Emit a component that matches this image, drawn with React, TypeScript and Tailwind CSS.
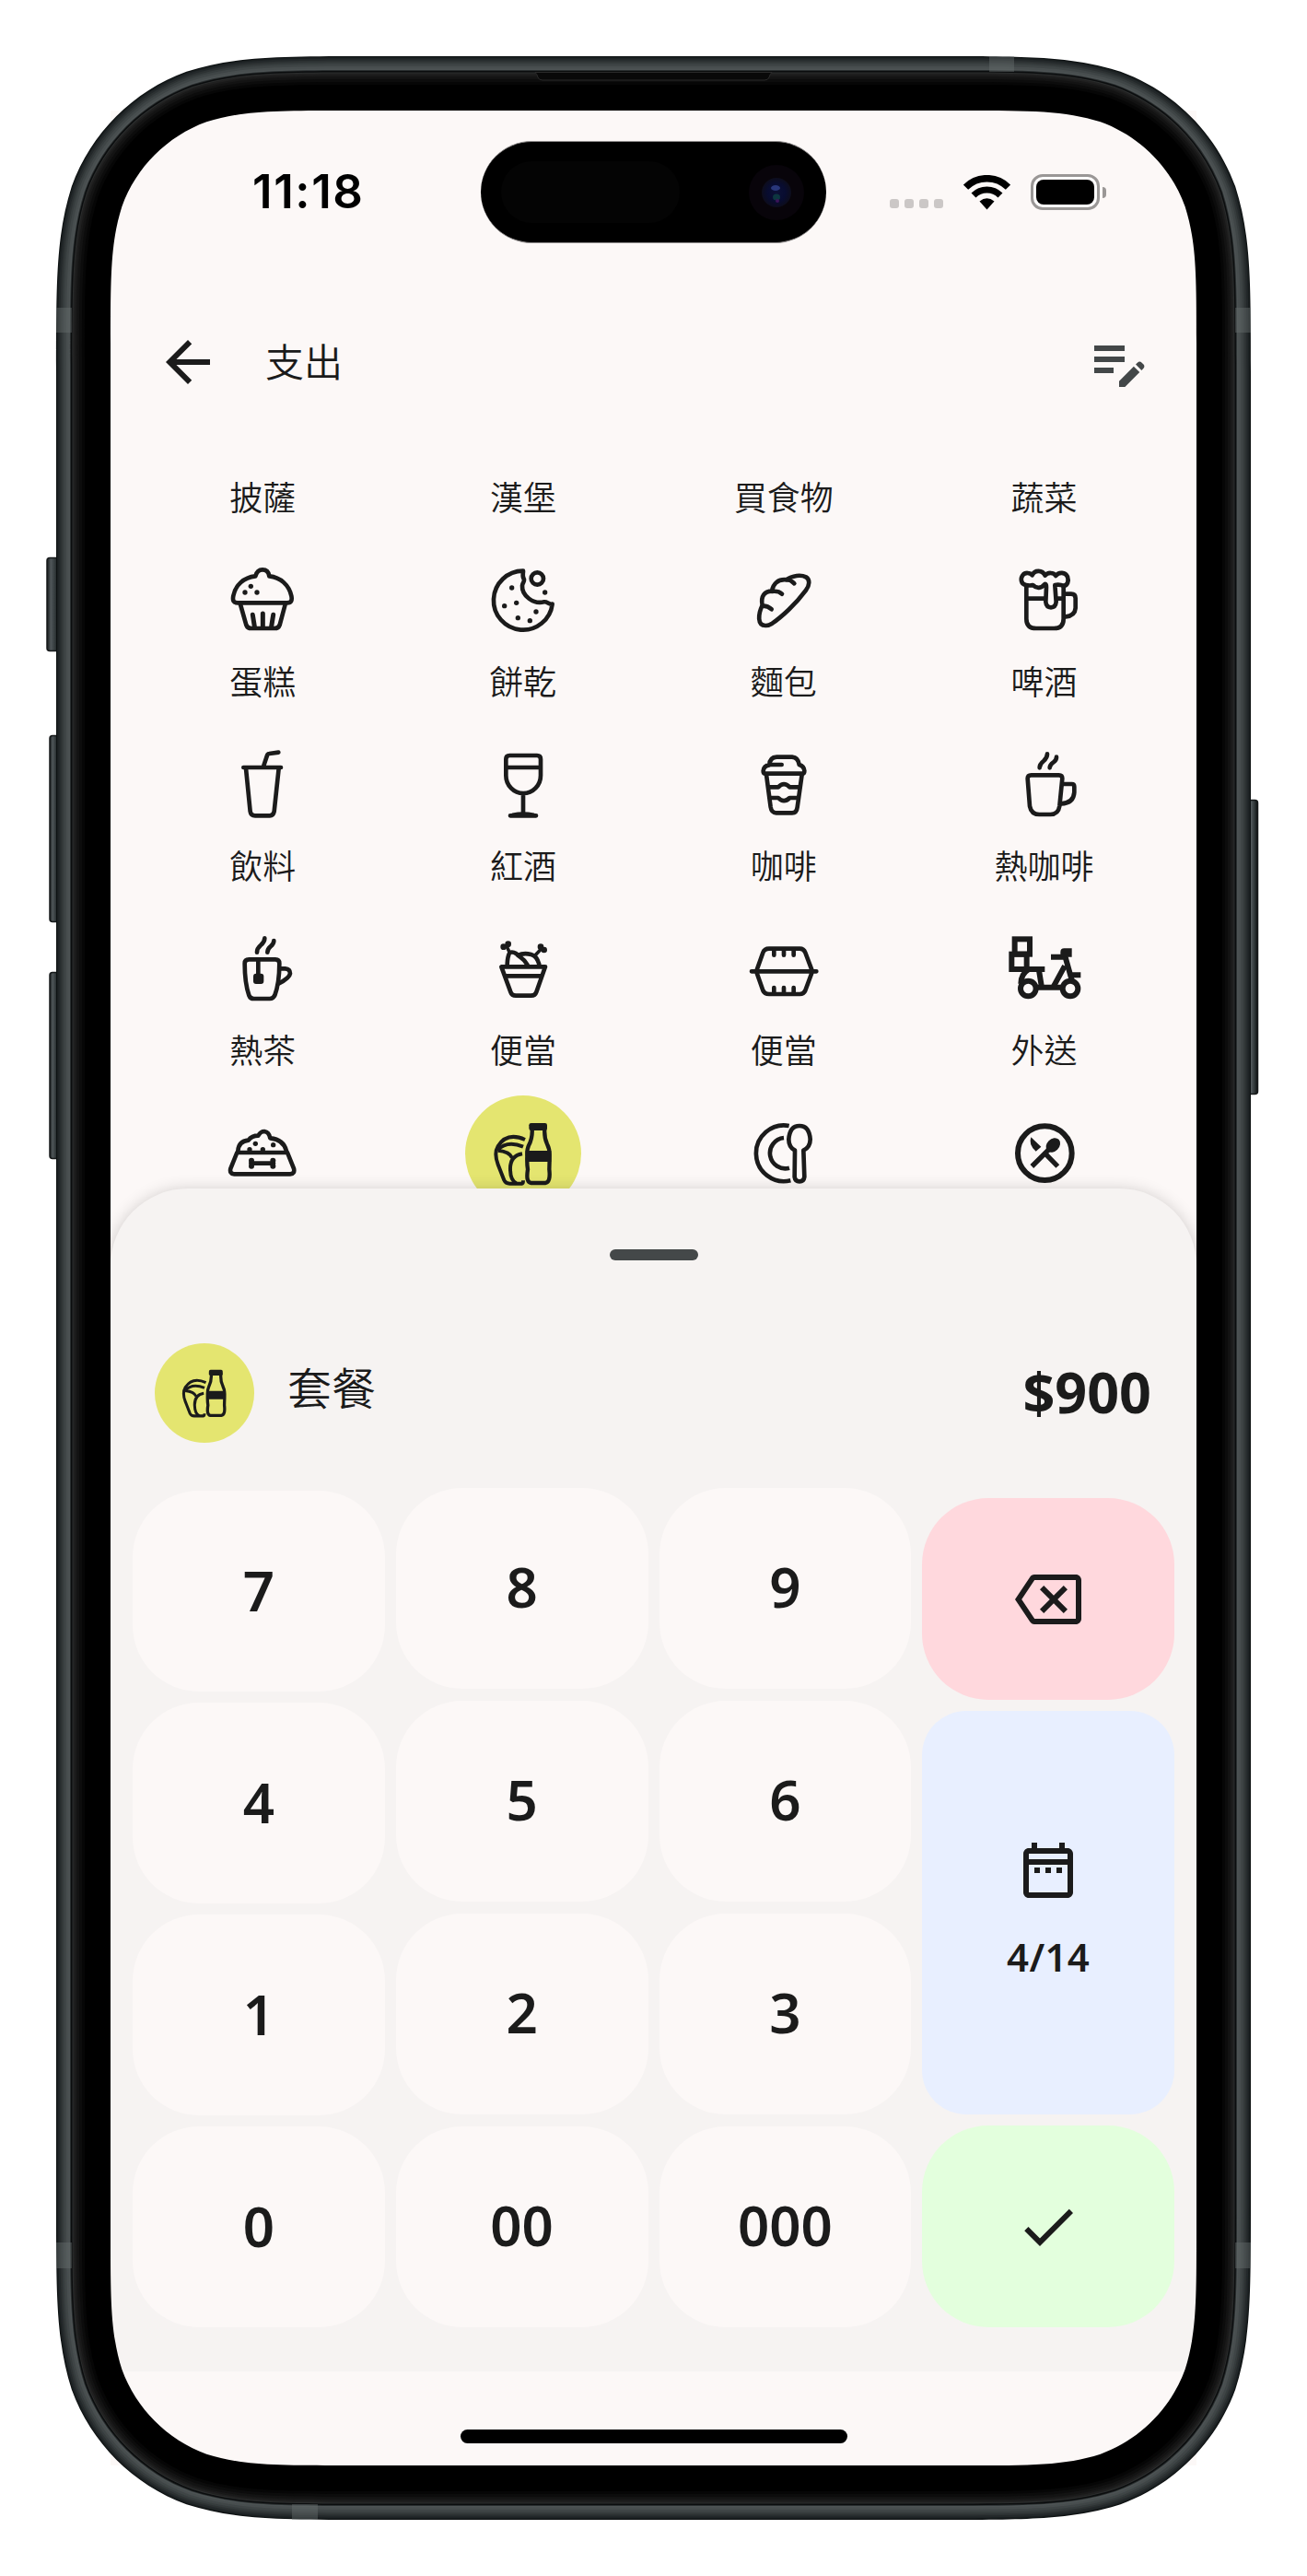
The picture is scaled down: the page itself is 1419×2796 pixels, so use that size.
import React from "react";

const INK = "#1b1b1b";

const Dots = ({ at, r = 8 }: { at: [number, number][]; r?: number }) => (
  <g fill={INK} stroke="none">
    {at.map(([x, y]) => (
      <circle key={`${x}-${y}`} cx={x} cy={y} r={r} />
    ))}
  </g>
);

type GlyphProps = { box: string; children: React.ReactNode; className?: string; width?: number };

const Glyph = ({ box, children, className = "size-[126px]", width = 14 }: GlyphProps) => (
  <svg viewBox={box} className={className} fill="none" stroke={INK} strokeWidth={width} strokeLinecap="round" strokeLinejoin="round">
    {children}
  </svg>
);

const Muffin = () => (
  <Glyph box="67 267 378 378">
    <path d="M175 463C161 463 158 455 161 440C168 405 195 380 233 376C237 361 245 355 256 355C268 355 276 362 278 376C315 380 342 405 350 440C353 455 350 463 336 463Z" />
    <path d="M184 468L203 535Q207 546 220 546H295Q308 546 312 535L330 468" />
    <path d="M224 502L230 540M257 498V540M291 502L285 540" strokeWidth="15" />
    <Dots at={[[218, 409], [199, 429], [238, 429]]} />
  </Glyph>
);

const Cookie = () => (
  <Glyph box="915 267 378 378">
    <path d="M1104 359A96 96 0 1 0 1199 467C1188 469 1182 458 1172 460C1138 469 1099 440 1101 407C1102 396 1108 398 1107 386C1100 378 1104 370 1104 359Z" />
    <circle cx="1150" cy="384" r="20" />
    <Dots at={[[1067, 414], [1043, 473], [1082, 463], [1087, 512], [1126, 521], [1146, 492], [1175, 429]]} />
  </Glyph>
);

const Bread = () => (
  <Glyph box="84 267 378 378">
    <path d="M213 537C186 537 189 500 203 471C197 442 210 425 234 425C238 400 255 385 282 388C300 373 330 371 345 379C359 388 357 405 345 422C312 467 265 510 235 530Q222 538 213 537Z" />
    <path d="M203 473Q220 472 233 484M234 426Q255 423 267 434M282 387Q296 388 307 400" />
  </Glyph>
);

const Beer = () => (
  <Glyph box="932 267 378 378">
    <path d="M1060 405C1044 402 1042 384 1050 373C1058 363 1074 364 1081 373C1089 355 1114 355 1123 374C1131 363 1151 363 1158 375C1168 361 1189 363 1196 378C1201 393 1196 405 1184 408" />
    <path d="M1060 405Q1074 408 1083 405Q1103 424 1122 402Q1127 401 1127 412L1125 460Q1127 478 1142 478Q1157 478 1159 460L1155 405Q1170 402 1184 408" />
    <path d="M1062 408V515Q1062 546 1094 546H1152Q1183 546 1183 515V408M1066 449H1122M1162 449H1183" />
    <path d="M1186 434H1208Q1222 434 1222 448V480Q1220 505 1190 508" />
  </Glyph>
);

const Soda = () => (
  <Glyph box="67 867 378 378">
    <path d="M260 993L271 960Q273 954 278 954L308 950M194 999H316" />
    <path d="M202 1002L216 1142Q218 1156 232 1156H280Q291 1156 294 1142L309 1002" />
  </Glyph>
);

const Wine = () => (
  <Glyph box="915 867 378 378">
    <path d="M1048 972Q1048 960 1060 960H1149Q1161 960 1161 972V1025A56.5 58 0 0 1 1048 1025ZM1048 999H1161M1104 1083V1150" />
    <path d="M1062 1156H1146M1070 1154Q1104 1147 1138 1154" />
  </Glyph>
);

const TakeawayCup = () => (
  <Glyph box="84 867 378 378">
    <path d="M213 1019Q206 1019 206 1010Q208 993 226 991Q227 966 250 965H300Q320 967 323 990Q339 995 340 1010Q340 1019 333 1019ZM228 990H266" />
    <path d="M216 1022L230 1128Q233 1147 248 1147H300Q315 1147 317 1128L332 1022" />
    <path d="M225 1063H255Q273 1044 292 1063H325M229 1098H255Q273 1117 292 1098H320" />
  </Glyph>
);

const HotCoffee = () => (
  <Glyph box="932 867 378 378">
    <path d="M1066 1035Q1066 1024 1078 1024H1168Q1179 1024 1179 1035L1170 1125Q1166 1152 1140 1152H1104Q1078 1152 1073 1125Z" />
    <path d="M1180 1053H1210Q1218 1053 1218 1062V1080Q1216 1115 1175 1117" />
    <path d="M1105 1000Q1105 988 1118 978Q1130 968 1130 955M1138 1000Q1138 990 1150 982Q1160 975 1160 965" />
  </Glyph>
);

const Tea = () => (
  <Glyph box="67 267 378 378">
    <path d="M238 401Q238 388 250 378Q263 368 263 355M272 401Q272 390 282 382Q293 374 293 363" />
    <path d="M198 437Q198 424 212 424H298Q311 424 311 437Q311 500 296 541Q291 552 280 552H228Q216 552 212 541Q198 500 198 437Z" />
    <path d="M311 454H330Q346 455 346 470Q344 485 308 503M242 424V475" />
    <rect x="226" y="470" width="34" height="34" rx="9" fill={INK} stroke="none" />
  </Glyph>
);

const Bucket = () => (
  <Glyph box="915 267 378 378">
    <path d="M1033 448H1176L1147 530Q1143 542 1130 542H1080Q1067 542 1063 530ZM1046 478H1163" />
    <path d="M1052 440Q1053 415 1060 402Q1070 398 1081 405L1094 416Q1110 427 1118 442M1087 411Q1105 402 1130 408Q1148 412 1156 440" />
    <path d="M1060 402L1052 385M1142 412L1162 391" strokeWidth="11" />
    <Dots r={10} at={[[1040, 383], [1055, 374], [1161, 383], [1172, 393]]} />
  </Glyph>
);

const LunchBox = () => (
  <Glyph box="84 267 378 378">
    <path d="M168 463H379M185 458L205 402Q210 389 225 389H325Q338 389 343 402L364 458M185 468L205 525Q210 537 225 537H325Q338 537 343 525L364 468" />
    <path d="M241 392V410M273 392V410M305 392V410M241 516V534M273 516V534M305 516V534" />
  </Glyph>
);

const Scooter = () => (
  <Glyph box="932 267 378 378" width={18}>
    <g strokeLinecap="butt" strokeLinejoin="miter">
      <rect x="1024" y="358" width="49" height="49" />
      <rect x="1014" y="407" width="49" height="49" />
      <circle cx="1068" cy="519" r="25" />
      <circle cx="1205" cy="519" r="25" />
      <path d="M1060 456H1122M1103 460L1112 515M1044 503Q1044 472 1070 456M1095 515H1180" />
      <path d="M1149 515L1187 445M1187 410L1211 495M1142 416H1192M1205 475H1239" />
      <path d="M1173 416V400Q1173 388 1185 388H1210V416Z" fill={INK} stroke="none" />
    </g>
  </Glyph>
);

const PetBowl = () => (
  <Glyph box="67 867 378 378">
    <path d="M173 1053L152 1105Q148 1122 164 1123H346Q362 1122 358 1105L337 1053Z" />
    <path d="M176 1048Q178 1016 210 1013Q221 998 242 998Q250 984 262 984Q277 986 281 1006Q325 1010 334 1048" />
    <path d="M218 1088H292" />
    <Dots r={9} at={[[220, 1079], [220, 1097], [290, 1079], [290, 1097]]} />
    <Dots at={[[233, 1024], [291, 1028], [214, 1043], [257, 1043]]} />
  </Glyph>
);

const MealSet = ({ className }: { className?: string }) => (
  <Glyph box="915 867 378 378" width={13} className={className}>
    <path d="M1133 975Q1135 1005 1122 1030Q1116 1042 1117 1065Q1116 1090 1119 1108Q1112 1150 1130 1152H1176Q1194 1150 1189 1108Q1190 1085 1190 1060Q1190 1040 1182 1025Q1172 1005 1174 975" />
    <rect x="1123" y="957" width="59" height="24" rx="7" fill={INK} stroke="none" />
    <path d="M1112 1047H1195V1083H1114Z" fill={INK} stroke="none" />
    <g strokeLinecap="butt" strokeWidth="12">
      <path d="M1110 1011Q1052 985 1022 1032Q1008 1055 1022 1092L1042 1143Q1047 1154 1060 1154H1100Q1104 1154 1104 1144" />
      <path d="M1020 1045Q1052 1012 1104 1034M1022 1046Q1060 1050 1068 1070M1101 1057Q1060 1064 1062 1110Q1063 1145 1082 1153" />
    </g>
  </Glyph>
);

const PlateSpoon = () => (
  <Glyph box="84 867 378 378">
    <path d="M290 966A91 91 0 1 0 295 1144M273 1005A50 50 0 1 0 291 1103" strokeLinecap="butt" />
    <path d="M309 1046Q289 1035 289 1010Q292 966 324 966Q356 966 359 1010Q359 1035 337 1046L340 1132Q338 1147 324 1147Q310 1147 308 1132Z" />
  </Glyph>
);

const CutleryCircle = () => (
  <Glyph box="932 867 378 378" width={18}>
    <circle cx="1122" cy="1055" r="88" />
    <path d="M1080 1098L1142 1036M1122 1055L1164 1098" strokeWidth="16" strokeLinecap="butt" />
    <ellipse cx="1149" cy="1029" rx="20" ry="26" transform="rotate(45 1149 1029)" fill={INK} stroke="none" />
    <path d="M1077 1003L1110 1034L1093 1049Q1068 1028 1077 1003Z" fill={INK} stroke="none" />
  </Glyph>
);

const Material = ({ d, className = "" }: { d: string; className?: string }) => (
  <svg viewBox="0 0 24 24" className={`size-[72px] shrink-0 ${className}`} fill="currentColor">
    <path d={d} />
  </svg>
);

const BACK = "M20 11H7.83l5.59-5.59L12 4l-8 8 8 8 1.41-1.41L7.83 13H20v-2z";
const EDIT_NOTE =
  "M3 10h11v2H3v-2zm0-2h11V6H3v2zm0 8h7v-2H3v2zm15.01-3.13.71-.71c.39-.39 1.02-.39 1.41 0l.71.71c.39.39.39 1.02 0 1.41l-.71.71-2.12-2.12zm-.71.71-5.3 5.3V21h2.12l5.3-5.3-2.12-2.12z";
const BACKSPACE =
  "M22 3H7c-.69 0-1.23.35-1.59.88L0 12l5.41 8.11c.36.53.9.89 1.59.89h15c1.1 0 2-.9 2-2V5c0-1.1-.9-2-2-2zm0 16H7.07L2.4 12l4.66-7H22v14zm-11.59-2L14 13.41 17.59 17 19 15.59 15.41 12 19 8.41 17.59 7 14 10.59 10.41 7 9 8.41 12.59 12 9 15.59z";
const CALENDAR =
  "M7 11h2v2H7v-2zm14-5v14c0 1.1-.9 2-2 2H5c-1.11 0-2-.9-2-2l.01-14c0-1.1.88-2 1.99-2h1V2h2v2h8V2h2v2h1c1.1 0 2 .9 2 2zM5 8h14V6H5v2zm14 12V10H5v10h14zm-4-7h2v-2h-2v2zm-4 0h2v-2h-2v2z";
const CHECK = "M9 16.17 4.83 12l-1.42 1.41L9 19 21 7l-1.41-1.41L9 16.17z";

const categories = [
  { name: "蛋糕", Icon: Muffin },
  { name: "餅乾", Icon: Cookie },
  { name: "麵包", Icon: Bread },
  { name: "啤酒", Icon: Beer },
  { name: "飲料", Icon: Soda },
  { name: "紅酒", Icon: Wine },
  { name: "咖啡", Icon: TakeawayCup },
  { name: "熱咖啡", Icon: HotCoffee },
  { name: "熱茶", Icon: Tea },
  { name: "便當", Icon: Bucket },
  { name: "便當", Icon: LunchBox },
  { name: "外送", Icon: Scooter },
  { name: "", Icon: PetBowl },
  { name: "", Icon: MealSet, selected: true },
  { name: "", Icon: PlateSpoon },
  { name: "", Icon: CutleryCircle },
];

/* Continuous-corner rounded rectangle, inset from the outer edge of the phone body. */
function body(inset: number) {
  const x0 = 61 + inset;
  const y0 = 61 + inset;
  const x1 = 1358 - inset;
  const y1 = 2735 - inset;
  const r = 224 - inset;
  const a = [1.52866, 1.08849, 0.86841, 0.63149, 0.37282, 0.16906, 0.07491].map((k) => k * r);
  const corner = (cx: number, cy: number, sx: number, sy: number, fromVertical: boolean) => {
    const pts: [number, number][] = [
      [0, a[0]], [0, a[1]], [0, a[2]], [a[6], a[3]], [a[5], a[4]],
      [a[4], a[5]], [a[3], a[6]], [a[2], 0], [a[1], 0], [a[0], 0],
    ];
    const p = (fromVertical ? pts : [...pts].reverse()).map(([x, y]) => `${(cx + sx * x).toFixed(2)} ${(cy + sy * y).toFixed(2)}`);
    return `${p[0]}C${p[1]} ${p[2]} ${p[3]}C${p[4]} ${p[5]} ${p[6]}C${p[7]} ${p[8]} ${p[9]}`;
  };
  return `M${corner(x0, y0, 1, 1, true)}L${corner(x1, y0, -1, 1, false)}L${corner(x1, y1, -1, -1, true)}L${corner(x0, y1, 1, -1, false)}Z`;
}

const bands: [number, string][] = [
  [0, "#0d1112"], [1, "#1a1f20"], [2.5, "#23282a"], [4.5, "#2d3233"], [6.5, "#363c3d"], [8.5, "#3f4546"],
  [11, "#484e4f"], [13.5, "#4d5354"], [15, "#2a2f30"], [16, "#0b0d0e"], [17.5, "#2b2d2d"], [18.5, "#202020"],
  [20.5, "#191919"], [22.5, "#131313"], [25, "#0c0c0c"], [28, "#060606"],
];

const bandEnd = body(45);

const PhoneBody = () => (
  <svg viewBox="0 0 1419 2796" className="pointer-events-none absolute inset-0 h-[2796px] w-[1419px]">
    <defs>
      <linearGradient id="button" x1="0" x2="1" y1="0" y2="0">
        <stop offset="0" stopColor="#15191a" />
        <stop offset="0.3" stopColor="#50575a" />
        <stop offset="0.6" stopColor="#343b3d" />
        <stop offset="1" stopColor="#0c0f10" />
      </linearGradient>
      <radialGradient id="lens">
        <stop offset="0" stopColor="#0c1136" />
        <stop offset="0.6" stopColor="#080c30" />
        <stop offset="1" stopColor="#0d0d1c" />
      </radialGradient>
    </defs>
    <g fill="url(#button)" stroke="#16191a" strokeWidth="1.5">
      <rect x="51" y="605.5" width="14" height="101" rx="3" />
      <rect x="54" y="798.5" width="10" height="202" rx="3" />
      <rect x="54" y="1055.5" width="10" height="202" rx="3" />
      <rect x="1355.5" y="868.5" width="10" height="319" rx="3" />
    </g>
    {bands.map(([inset, color]) => (
      <path key={inset} d={body(inset) + bandEnd} fill={color} fillRule="evenodd" />
    ))}
    <path d={body(31) + body(59)} fill="#000" fillRule="evenodd" />
    <g fill="#6a7071" fillOpacity="0.42">
      <path d="M61 334h17v27h-17zM1341 334h17v27h-17zM61 2434h17v28h-17zM1341 2434h17v28h-17zM1074 61h27v17h-27zM317 2718h28v17h-28z" />
    </g>
    <path d="M581 78.5Q583 80 584 84Q585 87 589 87H830Q834 87 835 84Q836 80 838 78.5Z" fill="#090909" stroke="#2a2a2a" strokeWidth="1" />
  </svg>
);

const Island = () => (
  <div className="flex h-[111px] w-[375px] items-center justify-between rounded-full border-y border-[#8e8b8b] bg-black pr-[24px] pl-[22px]">
    <div className="h-[67px] w-[194px] rounded-full bg-[#040404]" />
    <svg viewBox="0 0 60 60" className="size-[60px]">
      <circle cx="30" cy="30" r="30" fill="#08040a" />
      <circle cx="30" cy="30" r="16" fill="url(#lens)" />
      <ellipse cx="29" cy="25" rx="5" ry="3" fill="#29377a" />
      <ellipse cx="30" cy="35" rx="4" ry="3.500" fill="#0d3640" />
      <circle cx="31" cy="39" r="2" fill="#3a1458" />
    </svg>
  </div>
);

const StatusBar = () => (
  <div className="flex h-[177px] shrink-0 items-start pt-[33px]">
    <div className="flex h-[111px] w-[402px] items-center pl-[154px] font-['Inter'] text-[51px] font-semibold tracking-[1.6px] text-black">11:18</div>
    <Island />
    <div className="flex h-[111px] items-center pl-[69px]">
      <div className="mt-[25px] flex gap-[6px]">
        {[0, 1, 2, 3].map((i) => (
          <span key={i} className="size-[10px] rounded-[3px] bg-[#cbc7c6]" />
        ))}
      </div>
      <svg viewBox="0 0 51 38" className="ml-[22px] h-[38px] w-[51px]" fill="none" stroke="#000">
        <path d="M2.500 13.200A32.500 32.500 0 0 1 48.500 13.200" strokeWidth="7.500" />
        <path d="M11 22A20.500 20.500 0 0 1 40 22" strokeWidth="7" />
        <path d="M17.500 28.500Q25.500 22 33.500 28.500L25.500 37.500Z" fill="#000" stroke="none" />
      </svg>
      <div className="ml-[22px] h-[39px] w-[75px] rounded-[13px] border-[3px] border-[#9a9796] bg-white/60 p-[3px]">
        <div className="h-full w-full rounded-[8px] bg-black" />
      </div>
      <span className="ml-[3px] h-[12px] w-[4px] rounded-r-full bg-[#9a9796]" />
    </div>
  </div>
);

const Key = ({ label, className }: { label: string; className: string }) => (
  <button className={`flex h-[218.500px] items-center justify-center rounded-[72px] bg-[#fcf8f7] text-[60px] font-semibold ${className}`}>{label}</button>
);

const KeyColumn = ({ keys, gap, keyClass = "pb-[3px]" }: { keys: string[]; gap: string; keyClass?: string }) => (
  <div className={`flex flex-col ${gap}`}>
    {keys.map((k) => (
      <Key key={k} label={k} className={keyClass} />
    ))}
  </div>
);

const labelClass = "flex h-[51px] items-center text-[36px] font-[350] whitespace-nowrap";

export default function App() {
  return (
    <div className="relative h-[2796px] w-[1419px] overflow-hidden bg-white px-[120px] pt-[120px] font-['Noto_Sans','Noto_Sans_CJK_TC',sans-serif] text-[#1b1b1b]">
      <div className="flex h-[2556px] w-[1179px] flex-col overflow-hidden bg-[#fcf8f7]">
        <StatusBar />
        <header className="flex h-[192px] shrink-0 items-center px-[48px]">
          <Material d={BACK} />
          <h1 className="mb-[2px] ml-[48px] text-[42px] font-[350]">支出</h1>
          <Material d={EDIT_NOTE} className="ml-auto text-[#434748]" />
        </header>

        <main className="h-[885px] shrink-0 overflow-hidden px-6 pt-[26px]">
          <div className="grid h-[74px] grid-cols-4 justify-items-center">
            {["披薩", "漢堡", "買食物", "蔬菜"].map((name) => (
              <span key={name} className={labelClass}>{name}</span>
            ))}
          </div>
          <div className="grid grid-cols-4">
            {categories.map(({ name, Icon, selected }, i) => (
              <div key={i} className="flex h-[200px] flex-col items-center">
                <div className={selected ? "size-[126px] rounded-full bg-[#e4e570]" : "size-[126px]"}>
                  <Icon />
                </div>
                <span className={labelClass}>{name}</span>
              </div>
            ))}
          </div>
        </main>

        <section className="relative -mt-[84px] flex h-[1284px] shrink-0 flex-col rounded-t-[84px] bg-[#f6f3f2] px-6 pt-[66px] pb-[48px] shadow-[0_2px_18px_rgba(0,0,0,0.2)]">
          <div className="h-3 w-24 self-center rounded-full bg-[#444849]" />
          <div className="mt-[90px] flex h-[108px] items-center px-6">
            <div className="flex size-[108px] items-center justify-center rounded-full bg-[#e4e570]">
              <MealSet className="size-[96px]" />
            </div>
            <span className="mb-[10px] ml-[36px] text-[48px] font-[350]">套餐</span>
            <span className="mr-px mb-[3px] ml-auto text-[61px] leading-none font-bold">$900</span>
          </div>
          <div className="mt-auto grid grid-cols-4 items-end gap-3">
            <KeyColumn keys={["7", "4", "1", "0"]} gap="gap-[11.500px]" keyClass="pb-px" />
            <KeyColumn keys={["8", "5", "2", "00"]} gap="gap-[12.500px]" />
            <KeyColumn keys={["9", "6", "3", "000"]} gap="gap-[12.500px]" />
            <div className="flex flex-col gap-3">
              <button className="flex h-[219px] items-center justify-center rounded-[72px] bg-[#ffd8dd]">
                <Material d={BACKSPACE} />
              </button>
              <button className="flex h-[438px] flex-col items-center rounded-[48px] bg-[#e8efff] pt-[137px]">
                <Material d={CALENDAR} />
                <span className="mt-[31px] text-[42px] leading-[54px] font-semibold tracking-[0.3px]">4/14</span>
              </button>
              <button className="flex h-[219px] items-center justify-center rounded-[72px] bg-[#e3ffdd]">
                <Material d={CHECK} />
              </button>
            </div>
          </div>
        </section>

        <footer className="relative flex flex-1 justify-center bg-[#fcf8f7] pt-[63px]">
          <div className="h-[15px] w-[420px] rounded-full bg-black" />
        </footer>
      </div>
      <PhoneBody />
    </div>
  );
}
